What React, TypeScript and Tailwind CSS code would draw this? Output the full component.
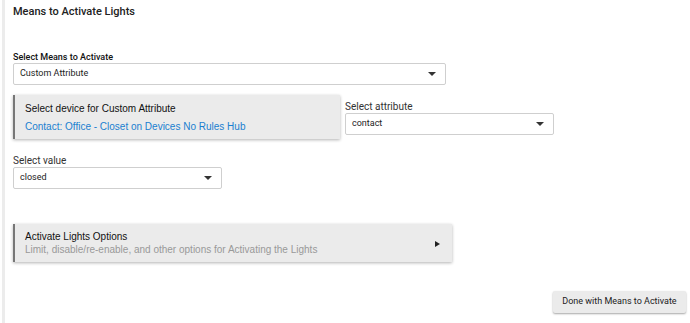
function Caret() {
  return (
    <svg width="8" height="4" viewBox="0 0 8 4" className="shrink-0">
      <path d="M0 0h8L4 4z" fill="#333" />
    </svg>
  );
}

function Select({ value, width }: { value: string; width: string }) {
  return (
    <div
      className={`${width} h-[22px] flex items-center justify-between pl-[6px] pr-[9px] bg-white border border-[#cfcfcf] rounded-[2px] text-[9px] text-[#222]`}
    >
      <span>{value}</span>
      <Caret />
    </div>
  );
}

function Label({ children, strong }: { children: string; strong?: boolean }) {
  return (
    <div
      className={`leading-[12px] ${strong ? "text-[9px] font-medium text-[#111]" : "text-[10px] text-[#333]"}`}
    >
      {children}
    </div>
  );
}

export default function App() {
  return (
    <div className="w-[690px] h-[323px] bg-white font-['Roboto',sans-serif] flex">
      <div className="w-[3px] ml-[2px] bg-[#ececec] shrink-0" />
      <main className="flex-1 pl-[8px] pr-[4px] flex flex-col">
        {/* Header */}
        <h1 className="mt-[5px] text-[11px] leading-[14px] font-medium text-[#222]">
          Means to Activate Lights
        </h1>

        <div className="mt-[32px]">
          <Label strong>Select Means to Activate</Label>
          <Select value="Custom Attribute" width="w-[433px]" />
        </div>

        <div className="mt-[10px] flex items-start gap-[5px]">
          <div className="w-[327px] h-[44px] bg-[#ebebeb] border-l-2 border-[#777] shadow-[0_1px_3px_rgba(0,0,0,0.3)] pl-[10px] pt-[7px] font-['Liberation_Sans',Arial,sans-serif]">
            <div className="text-[10px] leading-[13px] text-[#111]">
              Select device for Custom Attribute
            </div>
            <div className="mt-[5px] text-[10px] leading-[13px] text-[#1a7fd0]">
              Contact: Office - Closet on Devices No Rules Hub
            </div>
          </div>
          <div className="pt-[6px]">
            <Label>Select attribute</Label>
            <Select value="contact" width="w-[209px]" />
          </div>
        </div>

        <div className="mt-[16px]">
          <Label>Select value</Label>
          <Select value="closed" width="w-[209px]" />
        </div>

        {/* Options */}
        <div className="mt-[35px] w-[439px] h-[38px] bg-[#ebebeb] border-l-2 border-[#777] shadow-[0_1px_3px_rgba(0,0,0,0.3)] pl-[10px] pr-[12px] flex items-center justify-between font-['Liberation_Sans',Arial,sans-serif]">
          <div>
            <div className="text-[10px] leading-[13px] text-[#111]">Activate Lights Options</div>
            <div className="text-[10px] leading-[13px] text-[#999]">
              Limit, disable/re-enable, and other options for Activating the Lights
            </div>
          </div>
          <svg width="5" height="6" viewBox="0 0 5 6" className="mt-[2px]">
            <path d="M0 0l5 3-5 3z" fill="#222" />
          </svg>
        </div>

        <div className="mt-[29px] flex justify-end">
          <button className="w-[133px] h-[22px] bg-[#ebebeb] rounded-[2px] shadow-[0_1px_2px_rgba(0,0,0,0.35)] text-[9px] text-[#222] whitespace-nowrap">
            Done with Means to Activate
          </button>
        </div>
      </main>
    </div>
  );
}
